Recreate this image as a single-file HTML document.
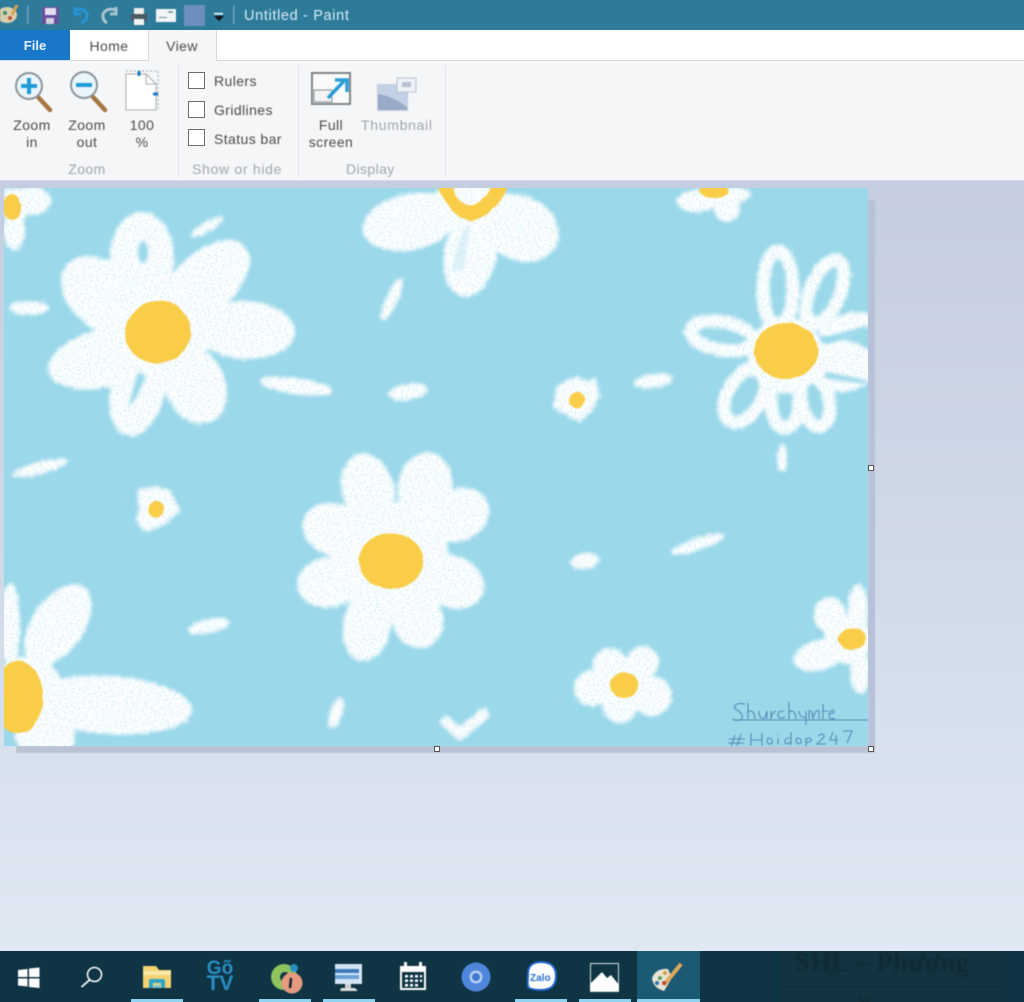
<!DOCTYPE html>
<html><head><meta charset="utf-8"><style>
html,body{margin:0;padding:0;height:1002px;overflow:hidden}
body{width:1024px;position:relative;font-family:"Liberation Sans",sans-serif;background:linear-gradient(180deg,#c5cde0 181px,#d2dbe9 600px,#dfe8f3 950px)}
div{position:absolute}
.t{font-size:14px;letter-spacing:.4px;line-height:16.5px;color:#4c4c4c;text-align:center;white-space:nowrap;filter:blur(.4px)}
.g{color:#a2a6ab}
.cb{width:15px;height:15px;border:1.5px solid #6f6f6f;background:#fff;left:188px}
.sep{top:65px;width:1px;height:112px;background:#e2e4e7}
.u{top:999px;height:3px;background:#8fd3ee}
.ic{position:absolute;filter:blur(.5px)}
</style></head><body>
<div style="left:0;top:0;width:1024px;height:30px;background:#2d7b99"></div>
<div class="t" style="left:244px;top:7.500px;color:#d8eef6;font-size:14.5px;letter-spacing:.65px">Untitled - Paint</div>
<svg class="ic" style="left:0;top:0" width="240" height="30" viewBox="0 0 240 30">
<ellipse cx="7" cy="15" rx="10" ry="8" fill="#d9cfae"/><circle cx="5" cy="13" r="2" fill="#3f8f5f"/><circle cx="10" cy="18" r="2" fill="#c0503a"/><path d="M12 15L17 5" stroke="#d8a24a" stroke-width="3"/>
<rect x="27" y="6" width="1.500" height="18" fill="#6ea5bb"/>
<rect x="42" y="7" width="17" height="17" fill="#6b4f9f"/><rect x="45" y="8" width="11" height="7" fill="#e6dff0"/><rect x="46" y="18" width="8" height="6" fill="#d5cfe2"/>
<path d="M75 10Q84 7 87 14Q88 20 81 23M75 7V14H81" fill="none" stroke="#2a93d6" stroke-width="3"/>
<path d="M116 10Q107 7 103 14Q102 20 107 23M116 7V14H110" fill="none" stroke="#a9c3cf" stroke-width="3"/>
<rect x="134" y="8" width="10" height="6" fill="#eee"/><rect x="131" y="14" width="16" height="7" fill="#4c5a62"/><rect x="134" y="19" width="10" height="6" fill="#f2f2f2"/>
<rect x="156" y="9" width="20" height="13" fill="#f1f5f8"/><rect x="168" y="11" width="5" height="2" fill="#8aa"/><rect x="159" y="17" width="8" height="1" fill="#889"/>
<rect x="184" y="5" width="21" height="21" fill="#6d8fbd"/>
<rect x="214" y="13" width="9" height="1.500" fill="#fff"/><path d="M214 16H224L219 21Z" fill="#111"/>
<rect x="233" y="6" width="1.500" height="18" fill="#6ea5bb"/>
</svg>
<div style="left:0;top:30px;width:1024px;height:30px;background:#fff;border-bottom:1px solid #dadbdc"></div>
<div style="left:0;top:30px;width:70px;height:30px;background:#1877c9;color:#e8f3fb;font-size:13px;font-weight:bold;line-height:31px;text-align:center;filter:blur(.3px)">File</div>
<div class="t" style="left:70px;top:37.500px;width:78px">Home</div>
<div style="left:148px;top:30px;width:67px;height:31px;background:#f5f6f7;border:1px solid #dadbdc;border-width:0 1px"></div>
<div class="t" style="left:148px;top:37.500px;width:68px">View</div>
<div style="left:0;top:61px;width:1024px;height:120px;background:#f5f6f7;border-bottom:1px solid #d8dce6;box-sizing:border-box"></div>
<div class="sep" style="left:178px"></div><div class="sep" style="left:298px"></div><div class="sep" style="left:445px"></div>
<svg class="ic" style="left:0;top:62px" width="450" height="60" viewBox="0 62 450 60">
<g fill="none"><path d="M38 97L50 110" stroke="#a5763f" stroke-width="4.500" stroke-linecap="round"/><circle cx="29" cy="86" r="13" fill="#eaf5fb" stroke="#8b959b" stroke-width="2"/><path d="M21 86H37M29 78V94" stroke="#1f9bd7" stroke-width="4"/>
<path d="M93 97L105 110" stroke="#a5763f" stroke-width="4.500" stroke-linecap="round"/><circle cx="84" cy="85" r="13" fill="#eaf5fb" stroke="#8b959b" stroke-width="2"/><path d="M76 85H92" stroke="#1f9bd7" stroke-width="4"/>
<path d="M126 71H158V110" stroke="#9aa" stroke-width="1" stroke-dasharray="2 2"/><path d="M126 74H146L156 84V110H126Z" fill="#fff" stroke="#a9adb0"/><path d="M146 74V84H156" stroke="#a9adb0"/></g>
<path d="M139 71V76M153 94H158" stroke="#1f7fc0" stroke-width="3"/>
<rect x="312" y="73" width="38" height="31" fill="#fafafa" stroke="#80868a" stroke-width="2"/><rect x="314" y="90" width="18" height="12" fill="#f3f3f3" stroke="#8a9094"/>
<path d="M328 98L344 81M335 80H347V92" fill="none" stroke="#2b9ed9" stroke-width="3.500"/>
<rect x="377" y="84" width="31" height="27" fill="#c3d1e4"/><path d="M378 94Q392 96 407 107V110H378Z" fill="#99a9c8"/>
<rect x="397" y="78" width="19" height="14" fill="#eef2f7" stroke="#b7c3d3"/><rect x="402" y="82" width="9" height="5" fill="#b5c0d2"/>
</svg>
<div class="t" style="left:12px;top:117px;width:40px">Zoom<br>in</div>
<div class="t" style="left:67px;top:117px;width:40px">Zoom<br>out</div>
<div class="t" style="left:122px;top:117px;width:40px">100<br>%</div>
<div class="t g" style="left:67px;top:160.500px;width:40px">Zoom</div>
<div class="cb" style="top:72px"></div><div class="cb" style="top:101px"></div><div class="cb" style="top:129px"></div>
<div class="t" style="left:214px;top:72.500px">Rulers</div>
<div class="t" style="left:214px;top:101.500px">Gridlines</div>
<div class="t" style="left:214px;top:130.500px">Status bar</div>
<div class="t g" style="left:192px;top:160.500px;letter-spacing:.7px">Show or hide</div>
<div class="t" style="left:306px;top:117px;width:50px">Full<br>screen</div>
<div class="t g" style="left:361px;top:117px;letter-spacing:.7px">Thumbnail</div>
<div class="t g" style="left:346px;top:160.500px">Display</div>

<div style="left:868px;top:200px;width:7px;height:552px;background:#b7c1d7;filter:blur(.6px)"></div>
<div style="left:16px;top:746px;width:859px;height:7px;background:#b9c3d3;filter:blur(.6px)"></div>
<svg style="position:absolute;left:4px;top:188px" width="864" height="558" viewBox="4 188 864 558">
<defs>
<filter id="c" x="-10%" y="-10%" width="120%" height="120%" color-interpolation-filters="sRGB"><feTurbulence type="fractalNoise" baseFrequency=".45" numOctaves="2" seed="4"/><feDisplacementMap in="SourceGraphic" scale="10" xChannelSelector="R" yChannelSelector="G"/><feGaussianBlur stdDeviation="1.500" result="b"/><feTurbulence type="fractalNoise" baseFrequency=".6" numOctaves="1" seed="9"/><feColorMatrix values="0 0 0 0 .66 0 0 0 0 .87 0 0 0 0 .94 0 0 0 2.400 -1.200"/><feGaussianBlur stdDeviation=".5"/><feComposite in2="b" operator="in" result="s"/><feMerge><feMergeNode in="b"/><feMergeNode in="s"/></feMerge></filter>
<filter id="y" x="-10%" y="-10%" width="120%" height="120%" color-interpolation-filters="sRGB"><feTurbulence type="fractalNoise" baseFrequency=".08" numOctaves="2" seed="2"/><feDisplacementMap in="SourceGraphic" scale="3" xChannelSelector="R" yChannelSelector="G"/><feGaussianBlur stdDeviation=".8"/></filter>
<filter id="h"><feGaussianBlur stdDeviation="1.800"/></filter>
</defs>
<rect x="4" y="188" width="864" height="558" fill="#9ad8ea"/>
<g filter="url(#c)" fill="#fff">
<!-- flower 1 -->
<ellipse cx="142" cy="258" rx="32" ry="46"/><ellipse cx="105" cy="297" rx="50" ry="33" transform="rotate(40 105 297)"/><ellipse cx="205" cy="283" rx="54" ry="30" transform="rotate(-43 205 283)"/><ellipse cx="245" cy="330" rx="50" ry="29" transform="rotate(3 245 330)"/><ellipse cx="105" cy="358" rx="58" ry="29" transform="rotate(-14 105 358)"/><ellipse cx="138" cy="390" rx="27" ry="47" transform="rotate(14 138 390)"/><ellipse cx="195" cy="385" rx="30" ry="40" transform="rotate(-22 195 385)"/><circle cx="158" cy="332" r="52"/>
<!-- flower 2 -->
<ellipse cx="368" cy="490" rx="26" ry="37" transform="rotate(-15 368 490)"/><ellipse cx="425" cy="487" rx="27" ry="35" transform="rotate(10 425 487)"/><ellipse cx="458" cy="515" rx="32" ry="26" transform="rotate(-25 458 515)"/><ellipse cx="452" cy="582" rx="33" ry="26" transform="rotate(20 452 582)"/><ellipse cx="418" cy="620" rx="25" ry="28" transform="rotate(-15 418 620)"/><ellipse cx="367" cy="625" rx="24" ry="36" transform="rotate(10 367 625)"/><ellipse cx="330" cy="582" rx="33" ry="25" transform="rotate(-10 330 582)"/><ellipse cx="335" cy="530" rx="33" ry="26" transform="rotate(20 335 530)"/><circle cx="391" cy="560" r="58"/>
<!-- flower 4 top -->
<ellipse cx="410" cy="222" rx="48" ry="28" transform="rotate(-12 410 222)"/><ellipse cx="470" cy="255" rx="26" ry="42" transform="rotate(10 470 255)"/><ellipse cx="520" cy="228" rx="40" ry="32" transform="rotate(25 520 228)"/><ellipse cx="470" cy="205" rx="42" ry="22"/>
<!-- top right / top left -->
<ellipse cx="697" cy="201" rx="20" ry="11"/><ellipse cx="727" cy="208" rx="13" ry="14"/><ellipse cx="735" cy="195" rx="16" ry="8"/><ellipse cx="715" cy="196" rx="18" ry="9"/>
<ellipse cx="32" cy="201" rx="19" ry="14"/><ellipse cx="14" cy="230" rx="11" ry="20"/><rect x="4" y="188" width="22" height="30"/>
<!-- flower 3 solid parts -->
<ellipse cx="840" cy="366" rx="36" ry="26"/><ellipse cx="845" cy="325" rx="28" ry="11" transform="rotate(-15 845 325)"/><circle cx="786" cy="355" r="38"/>
<!-- bottom-left -->
<ellipse cx="58" cy="625" rx="26" ry="46" transform="rotate(35 58 625)"/><ellipse cx="110" cy="705" rx="82" ry="29" transform="rotate(4 110 705)"/><ellipse cx="45" cy="735" rx="30" ry="24"/><ellipse cx="10" cy="625" rx="10" ry="42"/><circle cx="28" cy="690" r="34"/>
<!-- flower 8 -->
<circle cx="610" cy="665" r="17"/><circle cx="643" cy="662" r="16"/><circle cx="652" cy="696" r="20"/><circle cx="620" cy="706" r="17"/><circle cx="592" cy="688" r="18"/><circle cx="623" cy="685" r="26"/>
<!-- flower 9 -->
<ellipse cx="830" cy="615" rx="16" ry="18"/><ellipse cx="858" cy="610" rx="10" ry="26"/><ellipse cx="820" cy="655" rx="27" ry="15" transform="rotate(-15 820 655)"/><ellipse cx="860" cy="672" rx="10" ry="22"/><circle cx="848" cy="640" r="24"/>
<!-- small -->
<path d="M576 376L585 381L596 378L600 396L592 411L580 422L568 416L553 408L557 386Z"/><path d="M137 490L155 486L170 490L180 510L166 524L145 532L136 520L139 506Z"/>
<!-- dashes -->
<ellipse cx="29" cy="308" rx="20" ry="7"/><ellipse cx="207" cy="227" rx="19" ry="5" transform="rotate(-30 207 227)"/><ellipse cx="392" cy="299" rx="6" ry="23" transform="rotate(25 392 299)"/><ellipse cx="296" cy="386" rx="37" ry="8" transform="rotate(8 296 386)"/><ellipse cx="408" cy="392" rx="20" ry="8" transform="rotate(-10 408 392)"/><ellipse cx="653" cy="381" rx="20" ry="7" transform="rotate(-8 653 381)"/><ellipse cx="782" cy="458" rx="5" ry="14"/><ellipse cx="40" cy="468" rx="28" ry="6" transform="rotate(-15 40 468)"/><ellipse cx="698" cy="544" rx="28" ry="6" transform="rotate(-18 698 544)"/><ellipse cx="585" cy="561" rx="14" ry="8" transform="rotate(-10 585 561)"/><ellipse cx="209" cy="626" rx="21" ry="7" transform="rotate(-12 209 626)"/><ellipse cx="336" cy="713" rx="6" ry="17" transform="rotate(18 336 713)"/>
<path d="M446 722L460 734L484 714" fill="none" stroke="#fff" stroke-width="11" stroke-linecap="round"/>
</g>
<g filter="url(#c)" fill="none" stroke="#fff" stroke-width="13">
<ellipse cx="778" cy="289" rx="15" ry="38"/><ellipse cx="825" cy="292" rx="15" ry="34" transform="rotate(22 825 292)"/><ellipse cx="722" cy="336" rx="32" ry="14" transform="rotate(10 722 336)"/><ellipse cx="745" cy="395" rx="17" ry="30" transform="rotate(30 745 395)"/><ellipse cx="785" cy="400" rx="14" ry="28"/><ellipse cx="815" cy="400" rx="14" ry="27" transform="rotate(-12 815 400)"/>
</g>
<g fill="#9ad8ea" filter="url(#h)">
<ellipse cx="143" cy="252" rx="5" ry="11"/>
<path d="M138 372L128 408L136 398L146 376Z"/>
<path d="M822 338L866 326V331L826 344Z"/><path d="M826 372L866 380V384L824 378Z"/>
<path d="M452 270Q460 230 470 222L464 270Z" opacity=".3"/>
</g>
<g fill="#f9cd47" filter="url(#y)">
<ellipse cx="158" cy="332" rx="33" ry="31" transform="rotate(-15 158 332)"/>
<ellipse cx="391" cy="561" rx="32" ry="28"/>
<ellipse cx="786" cy="351" rx="32" ry="28"/>
<path d="M438 186Q450 218 472 221Q498 214 507 186L492 186Q482 204 470 205Q456 203 452 186Z"/>
<ellipse cx="714" cy="191" rx="15" ry="7"/>
<ellipse cx="12" cy="207" rx="9" ry="13"/>
<ellipse cx="18" cy="697" rx="25" ry="36"/>
<ellipse cx="624" cy="685" rx="14" ry="13"/>
<ellipse cx="852" cy="639" rx="14" ry="11"/>
<circle cx="577" cy="400" r="8"/><circle cx="156" cy="509" r="8"/>
</g>
<g fill="none" stroke="#5a89b5" stroke-width="1.100" style="filter:blur(.45px)">
<path d="M733 720H868"/>
<path d="M745 704Q733 702 735 709Q744 713 742 719Q738 722 733 719M748 703V719M748 712Q754 708 755 719M759 711Q759 720 765 718L767 711V719M771 711V719Q772 712 776 711M784 711Q777 711 778 716Q780 720 785 717M789 702V719M789 712Q795 708 796 719M799 711Q800 719 806 717V711V725M809 719V711Q812 709 813 719Q815 709 819 711V719M823 704V719M822 711H828M830 714Q836 713 833 710Q827 712 830 718Q832 720 835 718"/>
<path d="M735 735L731 747M741 734L737 746M729 739H745M728 743H744M751 733V746M762 733V746M751 740H762M768 738Q773 738 772 743Q768 746 767 741ZM778 738V744M778 734V735M790 738Q784 738 785 743Q789 745 791 741M791 732V745M797 738Q802 738 801 743Q796 745 796 740ZM806 738V748M806 739Q812 737 811 741Q809 743 806 742M818 736Q824 732 824 737L817 744H826M833 732L830 740H838M836 735V745M843 731H852L847 743"/>
</g>
</svg>
<div style="left:868px;top:465px;width:4px;height:4px;border:1px solid #555;background:#fff"></div>
<div style="left:434px;top:746px;width:4px;height:4px;border:1px solid #555;background:#fff"></div>
<div style="left:868px;top:746px;width:4px;height:4px;border:1px solid #555;background:#fff"></div>

<div style="left:0;top:951px;width:1024px;height:51px;background:#0f3444;overflow:hidden">
<div style="left:779px;top:0;width:222px;height:51px;background:#133340"></div>
<div style="left:637px;top:0;width:63px;height:51px;background:#1c5a74"></div>
<div style="left:795px;top:-4px;font:bold 27px 'Liberation Serif',serif;letter-spacing:.3px;color:#102a36;white-space:nowrap;filter:blur(.8px)">SHL – Phương</div>
<div style="left:783px;top:35px;width:218px;height:1px;background:#102a36"></div>
<div style="left:858px;top:43px;font:bold 14px 'Liberation Serif',serif;color:#102a36;filter:blur(.6px)">W</div>
</div>
<div class="u" style="left:131px;width:52px"></div><div class="u" style="left:259px;width:52px"></div><div class="u" style="left:323px;width:52px"></div><div class="u" style="left:515px;width:52px"></div><div class="u" style="left:579px;width:52px"></div><div class="u" style="left:637px;width:63px"></div>
<svg class="ic" style="left:0;top:951px" width="700" height="51" viewBox="0 951 700 51">
<path d="M18 970L27.500 969V977H18ZM29 968.500L39.500 967.500V977H29ZM18 978.500H27.500V986.500L18 985.500ZM29 978.500H39.500V988L29 987Z" fill="#fff"/>
<circle cx="94.500" cy="974.500" r="7" fill="none" stroke="#fff" stroke-width="1.500"/><path d="M89.500 980L81.500 987" stroke="#fff" stroke-width="1.800"/>
<path d="M143 966H156L159 970H171V988H143Z" fill="#f5d271"/><rect x="143" y="971" width="28" height="4" fill="#fbe8a6"/><path d="M149 988V981Q149 979 151 979H163Q165 979 165 981V988H161V983H153V988Z" fill="#2da6c8"/>
<rect x="154" y="985" width="6" height="3" fill="#71c7de"/>
<circle cx="284" cy="977" r="13" fill="#8fc35e"/><circle cx="285" cy="977" r="5" fill="#0f3444"/><circle cx="294" cy="968" r="4" fill="#2a8fc0"/><circle cx="292" cy="983" r="10.500" fill="#e59a80"/><path d="M291 978L290 988" stroke="#123" stroke-width="2.500"/>
<rect x="335" y="964" width="27" height="20" fill="#d4e6f5"/><rect x="335" y="969" width="24" height="4" fill="#3d79bd"/><rect x="335" y="975" width="24" height="4" fill="#6aa0d6"/><path d="M341 988H355L358 991H340Z" fill="#ddd"/><rect x="345" y="984" width="6" height="4" fill="#ccc"/>
<rect x="400" y="966" width="26" height="24" fill="#fff"/><rect x="402" y="972" width="22" height="16" fill="#0f3444"/><path d="M404 962h3v5h-3ZM419 962h3v5h-3Z" fill="#fff"/>
<path d="M405 975h3v2.500h-3zM410 975h3v2.500h-3zM415 975h3v2.500h-3zM420 975h2v2.500h-2zM405 979.500h3v2.500h-3zM410 979.500h3v2.500h-3zM415 979.500h3v2.500h-3zM420 979.500h2v2.500h-2zM405 984h3v2.500h-3zM410 984h3v2.500h-3zM415 984h3v2.500h-3z" fill="#fff"/>
<circle cx="476" cy="977" r="14.500" fill="#4f86dc"/><circle cx="476" cy="977" r="6.500" fill="#b6d1ef"/><circle cx="476" cy="977" r="4" fill="#3f78cf"/>
<path d="M541 962Q556 962 556 976Q556 990 541 990Q534 990 529 988Q527 986 528 976Q527 962 541 962Z" fill="#fff" stroke="#1d63c8" stroke-width="2"/>
<text x="530" y="981" font-family="Liberation Sans,sans-serif" font-size="10" font-weight="bold" fill="#2a6fd0">Zalo</text>
<rect x="590.500" y="963.500" width="28" height="28" fill="#0f3444" stroke="#d7e0e5"/><path d="M590 991V984L602 972L607 978L611 975L619 985V991Z" fill="#fff"/>
<path d="M652 978Q656 968 668 969L672 978L664 991Q653 988 652 978Z" fill="#e8e3d4"/><path d="M664 985L681 964" stroke="#e0a85c" stroke-width="4"/><circle cx="660" cy="978" r="2" fill="#5a9d5f"/><circle cx="657" cy="983" r="2" fill="#2f6fa8"/><circle cx="665" cy="973" r="2" fill="#c9a13a"/><circle cx="664" cy="983" r="2" fill="#b5483a"/>
</svg>
<div style="left:203px;top:961px;width:34px;text-align:center;font-size:19px;font-weight:bold;line-height:15px;color:#2c8fc7;filter:blur(.4px)">Gõ<br><span style="font-size:21px">TV</span></div>
</body></html>
